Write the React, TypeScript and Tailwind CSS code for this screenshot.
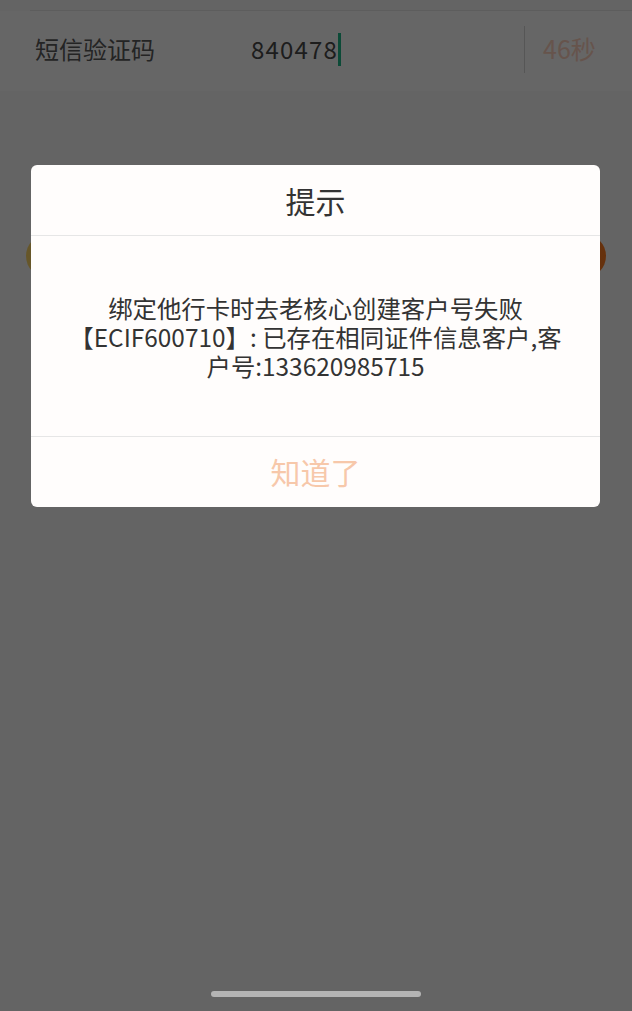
export default function App() {
  const font = {
    fontFamily: '"Noto Sans CJK SC", "Noto Sans", Roboto, sans-serif',
  };

  return (
    <div
      className="relative h-[1011px] w-full overflow-hidden bg-[#fafafa]"
      style={font}
    >
      {/* page behind the mask */}
      <div className="pt-[10px]">
        <div className="ml-[30px] h-px bg-[#e8e8e8]" />
        <div className="flex h-[80px] items-center bg-white pb-[4px] pl-[35px]">
          <span className="w-[216px] text-[24px] text-[#5a5a5a]">短信验证码</span>
          <div className="flex flex-1 items-center">
            <span className="text-[24px] tracking-[1.2px] text-[#4a4a4a]">840478</span>
            <span className="h-[33px] w-[3px] bg-[#1fb88a]" />
          </div>
          <div className="h-[47px] w-px bg-[#d8d8d8]" />
          <span className="w-[107px] pl-[18px] text-[25px] text-[#ffd2bf]">46秒</span>
        </div>
      </div>
      <div className="mx-[26px] mt-[143px] h-[44px] rounded-full bg-[linear-gradient(to_right,#ffd868,#ffa040_60%,#ff7a20)]" />

      {/* mask */}
      <div className="absolute inset-0 bg-black/60" />

      {/* dialog */}
      <div className="absolute left-[31px] top-[165px] w-[569px] overflow-hidden rounded-[6px] bg-[#fffdfc]">
        <div className="flex h-[71px] items-center justify-center border-b border-[#e6e6e6] text-[30px] text-[#333]">
          提示
        </div>
        <div className="flex h-[200px] items-center justify-center px-[20px] text-center text-[24.4px] leading-[29px] text-[#333]">
          <p>
            绑定他行卡时去老核心创建客户号失败
            <br />
            【ECIF600710】: 已存在相同证件信息客户,客
            <br />
            户号:133620985715
          </p>
        </div>
        <div className="flex h-[71px] items-center justify-center border-t border-[#e6e6e6] pb-[2px] text-[30px] text-[#f7c8aa]">
          知道了
        </div>
      </div>

      {/* home indicator */}
      <div className="absolute bottom-[14px] left-[211px] h-[6px] w-[210px] rounded-full bg-[#b4b4b4]" />
    </div>
  );
}
